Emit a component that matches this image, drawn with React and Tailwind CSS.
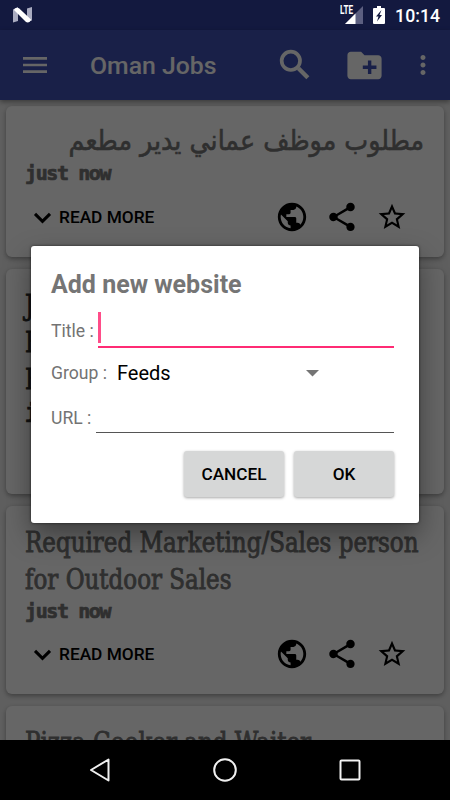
import React, { useState } from 'react';
import { MdMenu, MdMoreVert, MdPublic, MdShare, MdStarBorder } from 'react-icons/md';

const ARTICLES = [
  { id: 1, lines: ['مطلوب موظف عماني يدير مطعم'], rtl: true, height: 'h-[151px]' },
  { id: 2, lines: ['Job opening for', 'Experienced', 'Electricians'], unread: true, height: 'h-[225px]' },
  { id: 3, lines: ['Required Marketing/Sales person', 'for Outdoor Sales'], height: 'h-[188px]' },
  { id: 4, lines: ['Pizza Cooker and Waiter'], height: 'h-[151px]' },
];

const StatusBar = () => (
  <div className="flex h-[30px] shrink-0 items-center bg-[#303f9f]" />
);

// System icons stay bright while a dialog dims the window
const StatusIcons = () => (
  <div className="absolute inset-x-0 top-0 z-20 flex h-[30px] items-center pl-[13px] pr-[10px] text-white">
    <svg width="20" height="16" viewBox="0 0 20 16">
      <path d="M0 2.5L5 0v14L0 15.5z" fill="#a9abc0" />
      <path d="M14 1.5L19 0v13.5L14 15z" fill="#a9abc0" />
      <path d="M1 3C2 .6 4.5.2 6 1.300L18 12.500C17.500 15 15 16 13 15z" fill="#fff" />
    </svg>
    <div className="relative ml-auto h-[20px] w-[23px]">
      <span className="absolute left-0 top-0 origin-left scale-x-[0.68] text-[12px] font-bold leading-[10px]">LTE</span>
      <svg className="absolute left-[5px] top-px" width="18" height="18" viewBox="0 0 18 18">
        <path d="M18 0v18H0z" fill="#5c5f80" />
        <path d="M10.500 7.500V18H0z" fill="#fff" />
      </svg>
    </div>
    <svg className="ml-[10px]" width="12" height="18" viewBox="0 0 12 18">
      <path d="M4 0h4v2h3a1 1 0 0 1 1 1v14a1 1 0 0 1-1 1H1a1 1 0 0 1-1-1V3a1 1 0 0 1 1-1h3z" fill="#fff" />
      <path d="M8.500 4L3 10.500h2.500L4 15.500 9 9H6.500z" fill="#131940" />
    </svg>
    <span className="ml-[10px] pt-px text-[17.700px] font-medium leading-[20px]">10:14</span>
  </div>
);

const Toolbar = () => (
  <header className="relative z-10 flex h-[70px] shrink-0 items-center bg-[#3f51b5] pl-[19px] pr-[12px] text-white shadow-[0_2px_5px_rgba(0,0,0,0.4)]">
    <MdMenu size={32} />
    <h1 className="ml-[39px] pt-[2px] text-[24.800px] font-medium leading-[30px]">Oman Jobs</h1>
    <div className="ml-auto flex items-center">
      <svg width="40" height="40" viewBox="0 0 24 24" fill="none" stroke="currentColor">
        <circle cx="9.500" cy="9.500" r="5.500" strokeWidth="2.200" />
        <path d="M14 14l5.700 5.700" strokeWidth="2.600" />
      </svg>
      <svg className="ml-[29px]" width="41" height="41" viewBox="0 0 24 24" fill="currentColor">
        <path d="M20 6h-8l-2-2H4c-1.110 0-1.990.89-1.990 2L2 18c0 1.110.89 2 2 2h16c1.110 0 2-.89 2-2V8c0-1.110-.89-2-2-2zm-1 8h-3v3h-2v-3h-3v-2h3V9h2v3h3v2z" />
      </svg>
      <MdMoreVert className="ml-[23px]" size={30} />
    </div>
  </header>
);

const ArticleCard = ({ article }) => (
  <article className={`flex shrink-0 flex-col rounded-[6px] bg-white px-[20px] pt-[18px] shadow-[0_2px_5px_rgba(0,0,0,0.35)] ${article.height}`}>
    <h2 className={article.unread ? 'text-[#303030]' : 'text-[#757575]'}>
      {article.lines.map(line =>
        article.rtl ? (
          <span key={line} dir="rtl" className="block h-[36px] origin-right scale-x-[0.905] whitespace-nowrap font-['DejaVu_Sans'] text-[28px] leading-[34px] [-webkit-text-stroke:0.6px_currentColor]">
            {line}
          </span>
        ) : (
          <span key={line} className="-ml-px block h-[37px] origin-left scale-x-[0.947] whitespace-nowrap font-['DejaVu_Serif'] text-[27px] leading-[38px] [font-stretch:condensed] [-webkit-text-stroke:0.8px_currentColor]">
            {line}
          </span>
        )
      )}
    </h2>
    <p className={`-ml-px h-[26px] whitespace-nowrap font-['DejaVu_Sans_Mono'] text-[20px] font-bold leading-[26px] tracking-[-1.400px] [-webkit-text-stroke:0.7px_currentColor] ${article.unread ? 'text-[#303030]' : 'text-[#757575]'}`}>
      just now
    </p>
    <div className="mt-auto mb-[23px] flex items-center pl-px pr-[16px] text-black">
      <svg width="31" height="31" viewBox="0 0 24 24" fill="none" stroke="currentColor" strokeWidth="2.400">
        <path d="M6.200 9.200L12 15l5.800-5.800" />
      </svg>
      <span className="ml-px pt-px text-[17.300px] font-medium">READ MORE</span>
      <div className="ml-auto flex items-center">
        <MdPublic size={34} />
        <MdShare className="ml-[16px]" size={34} />
        <MdStarBorder className="ml-[17px]" size={32} />
      </div>
    </div>
  </article>
);

const AddWebsiteDialog = () => {
  const [title, setTitle] = useState('');
  const [url, setUrl] = useState('');

  return (
    <div className="absolute inset-x-0 top-0 bottom-[60px] z-10 flex items-center justify-center bg-black/60 pt-[29px]">
      <div className="h-[277px] w-[388px] rounded-[3px] bg-white pl-[20px] pr-[25px] pt-[24px] shadow-[0_12px_28px_rgba(0,0,0,0.4),0_0_3px_rgba(0,0,0,0.6)]">
        <h3 className="text-[25px] font-bold leading-[30px] text-[#757575]">Add new website</h3>

        <div className="mt-[10px] flex h-[38px] items-center">
          <label className="w-[47px] shrink-0 whitespace-nowrap pt-[3px] text-[17.600px] leading-[24px] text-[#737373]">Title :</label>
          <div className="flex h-full flex-1 items-start border-b-2 border-[#ff2b74] pt-[2px]">
            <span className="h-[31px] w-[3px] bg-[#ff4d89]" />
            <input value={title} onChange={e => setTitle(e.target.value)} className="w-full outline-none" />
          </div>
        </div>

        <div className="mt-[12px] flex h-[26px] items-center">
          <label className="w-[66px] shrink-0 whitespace-nowrap text-[17.600px] leading-[24px] text-[#737373]">Group :</label>
          <span className="text-[20px] leading-[24px] text-black">Feeds</span>
          <svg className="ml-auto mr-[75px]" width="13" height="7" viewBox="0 0 13 7">
            <path d="M0 0h13L6.500 6.500z" fill="#757575" />
          </svg>
        </div>

        <div className="mt-[12px] flex h-[36px] items-center">
          <label className="w-[45px] shrink-0 whitespace-nowrap pt-[3px] text-[17.600px] leading-[24px] text-[#737373]">URL :</label>
          <div className="flex h-[35px] flex-1 items-center self-start border-b border-[#555]">
            <input value={url} onChange={e => setUrl(e.target.value)} className="w-full outline-none" />
          </div>
        </div>

        <div className="mt-[17px] flex justify-end gap-[10px] text-[17.200px] font-medium text-black">
          <button className="h-[46px] w-[100px] rounded-[3px] bg-[#d6d7d7] pt-px shadow-[0_1px_3px_rgba(0,0,0,0.35)]">CANCEL</button>
          <button className="h-[46px] w-[100px] rounded-[3px] bg-[#d6d7d7] pt-px shadow-[0_1px_3px_rgba(0,0,0,0.35)]">OK</button>
        </div>
      </div>
    </div>
  );
};

const NavigationBar = () => (
  <nav className="relative z-20 flex h-[60px] shrink-0 items-center justify-center gap-[101px] bg-black">
    <svg width="24" height="26" viewBox="0 0 24 26" fill="none" stroke="#f0f0f0" strokeWidth="2" strokeLinejoin="round">
      <path d="M20.500 2.500v21L3 13z" />
    </svg>
    <svg width="24" height="24" viewBox="0 0 24 24" fill="none" stroke="#f0f0f0" strokeWidth="2">
      <circle cx="12" cy="12" r="10.800" />
    </svg>
    <svg width="24" height="24" viewBox="0 0 24 24" fill="none" stroke="#f0f0f0" strokeWidth="2">
      <rect x="2.500" y="2.500" width="19" height="19" rx="1" />
    </svg>
  </nav>
);

export default function App() {
  return (
    <div className="relative flex h-[800px] w-[450px] flex-col overflow-hidden bg-[#eeeeee] font-[Roboto,sans-serif]">
      <StatusBar />
      <Toolbar />
      <main className="flex min-h-0 flex-1 flex-col gap-[12px] overflow-hidden px-[6px] pt-[6px]">
        {ARTICLES.map(a => (
          <ArticleCard key={a.id} article={a} />
        ))}
      </main>
      <NavigationBar />
      <AddWebsiteDialog />
      <StatusIcons />
    </div>
  );
}
